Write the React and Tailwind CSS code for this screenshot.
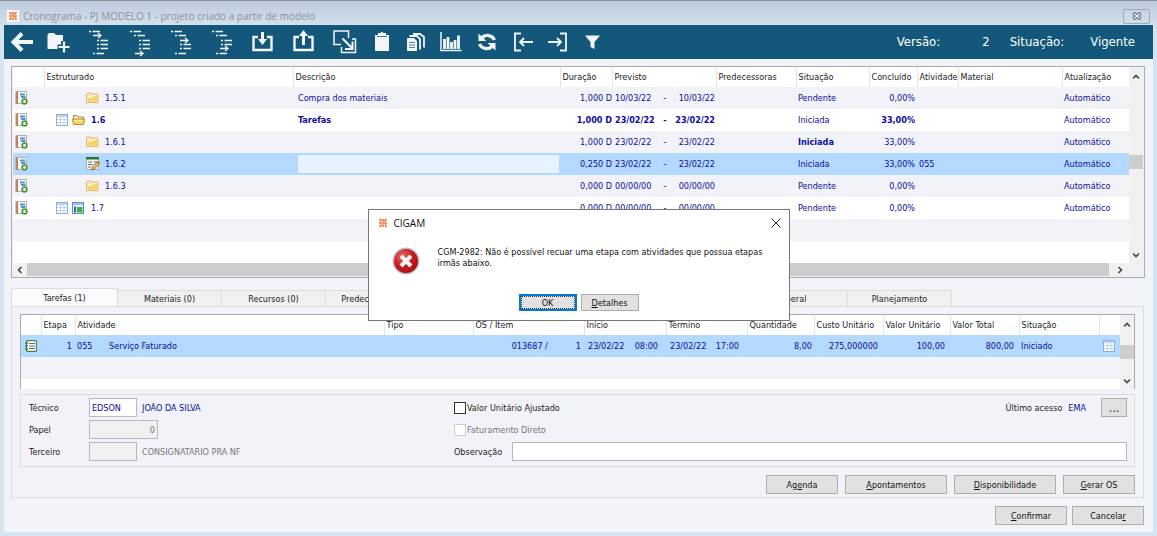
const stages = [
  { code: '1.5.1', level: 2, icon: 'folder', description: 'Compra dos materiais', duration: '1,000 D', start: '10/03/22', end: '10/03/22', status: 'Pendente', done: '0,00%' },
  { code: '1.6', level: 1, icon: 'open', description: 'Tarefas', duration: '1,000 D', start: '23/02/22', end: '23/02/22', status: 'Iniciada', done: '33,00%', bold: true },
  { code: '1.6.1', level: 2, icon: 'folder', duration: '1,000 D', start: '23/02/22', end: '23/02/22', status: 'Iniciada', done: '33,00%', boldStatus: true },
  { code: '1.6.2', level: 2, icon: 'edit', duration: '0,250 D', start: '23/02/22', end: '23/02/22', status: 'Iniciada', done: '33,00%', activity: '055', selected: true },
  { code: '1.6.3', level: 2, icon: 'folder', duration: '0,000 D', start: '00/00/00', end: '00/00/00', status: 'Pendente', done: '0,00%' },
  { code: '1.7', level: 1, icon: 'module', duration: '0,000 D', start: '00/00/00', end: '00/00/00', status: 'Pendente', done: '0,00%' },
];

function LogoIcon() {
  return (
    <svg className="h-3 w-3 shrink-0" viewBox="0 0 12 12">
      <rect width="12" height="12" rx="1" fill="#fff" />
      <path d="M2.500 2l2 2.500M5.500 2l1 2.500M9.500 2L7.500 4.500M2 6h3M6 5l1 2M7.500 6h2.500M2.500 10L4.500 7.500M6 10V7.500M9.500 10L8 7.500" stroke="#f0702a" strokeWidth="1.600" fill="none" />
    </svg>
  );
}

function NotebookIcon() {
  return (
    <svg className="h-[14px] w-[13px]" viewBox="0 0 13 14">
      <rect x="2.500" y="0.500" width="9" height="12" fill="#f6f8fb" stroke="#a9b4c2" />
      <rect x="0.500" y="0.500" width="2.500" height="12.500" fill="#c07a55" />
      <path d="M0 2h1.500M0 4.500h1.500M0 7h1.500M0 9.500h1.500M0 12h1.500" stroke="#f3dccd" strokeWidth="0.600" />
      <path d="M5 3.500h5M6 6h4.500" stroke="#5b8ecb" strokeWidth="1.800" />
      <circle cx="9.500" cy="10.500" r="2.300" fill="#fff" stroke="#4e9a3a" strokeWidth="1.800" />
    </svg>
  );
}

function GridIcon() {
  return (
    <svg className="h-3 w-3" viewBox="0 0 12 12">
      <rect x="0.500" y="0.500" width="11" height="11" fill="#fff" stroke="#86b1e0" />
      <rect x="1" y="1" width="10" height="2" fill="#bcd6f2" />
      <path d="M1 5.500h10M1 8.500h10M4.500 3v8M8 3v8" stroke="#b3cde8" strokeWidth="0.800" />
    </svg>
  );
}

function FolderIcon() {
  return (
    <svg className="h-3 w-[13px]" viewBox="0 0 13 12">
      <path d="M0.500 10.500v-8.500l1-1h3l1 1h6.500v8.500z" fill="#fbe9b0" stroke="#dfb566" />
      <path d="M2 5.500h4.500l1-1.500h3.500v5.500H2z" fill="#f7d365" />
      <path d="M2 5h4l1-1.500h4" stroke="#fffdf0" fill="none" />
    </svg>
  );
}

function OpenFolderIcon() {
  return (
    <svg className="h-3 w-[13px]" viewBox="0 0 13 12">
      <path d="M1.500 9V1.500h3.500l1 1.500h5.500v3" fill="#fdf4cf" stroke="#a58a45" />
      <path d="M0.500 5h12l-1 5.500h-10z" fill="#f8d467" stroke="#bf8a2c" />
      <path d="M2 6.500h9" stroke="#fff0b3" />
    </svg>
  );
}

function ModuleIcon() {
  return (
    <svg className="h-3 w-3" viewBox="0 0 12 12">
      <rect x="0.500" y="0.500" width="11" height="11" fill="#e8f2fd" stroke="#5c8fce" />
      <path d="M1 2h10" stroke="#9cc1ea" strokeWidth="2" />
      <rect x="2" y="4.500" width="2" height="6" fill="#2f6ab4" />
      <rect x="5" y="5" width="5.500" height="5.500" fill="#43b03d" />
    </svg>
  );
}

function EditIcon() {
  return (
    <svg className="h-[14px] w-[13px] overflow-visible" viewBox="0 0 13 14">
      <rect x="0.500" y="0.500" width="12" height="12" fill="#f4f7f4" stroke="#9fb0a5" />
      <rect width="13" height="2.500" fill="#237a2a" />
      <path d="M2 5h4M2 7.500h5M2 10h3M8 5h3" stroke="#5d7483" />
      <path d="M5.500 13l1-3 5-5.500 2 2L8.500 12z" fill="#eeb94e" stroke="#86572a" strokeWidth="0.800" />
      <path d="M11.500 4.500l2 2" stroke="#d3503f" strokeWidth="1.500" />
    </svg>
  );
}

function ListIcon() {
  return (
    <svg className="h-3 w-3" viewBox="0 0 12 12">
      <rect x="1.500" y="0.700" width="10" height="10.600" rx="1" fill="#fff" stroke="#3b8b45" strokeWidth="1.300" />
      <path d="M4 3.500h6M4 6h6M4 8.500h6" stroke="#666" />
      <path d="M0 3h3M0 6h3M0 9h3" stroke="#35673d" />
    </svg>
  );
}

const stageIcons = { folder: FolderIcon, open: OpenFolderIcon, edit: EditIcon, module: ModuleIcon };

function ToolIcon({ label, width = 'w-[41px]', children }) {
  return (
    <button type="button" aria-label={label} title={label} className={`${width} flex h-7 shrink-0 items-center justify-center text-[#f2f6f8]`}>
      <svg className="h-6 w-6 shrink-0 overflow-visible" viewBox="0 0 24 24" fill="none" stroke="currentColor" strokeWidth="1.500">{children}</svg>
    </button>
  );
}

const treeRowY = [1.5, 5.5, 10.5, 14.5, 18.5, 23.5];

// Outline with five plain rows and one arrow row
function TreeIcon({ label, arrow, indents }) {
  return (
    <ToolIcon label={label}>
      {indents.map((x, i) => {
        const y = treeRowY[i];
        return i === arrow
          ? <path key={i} d={`M${x} ${y}h8M${x + 5} ${y - 2.5}l3 2.500l-3 2.500`} strokeWidth="1.300" />
          : <path key={i} d={`M${x} ${y}h2M${x + 3.5} ${y}h7.500`} strokeWidth="1.300" />;
      })}
    </ToolIcon>
  );
}

function Toolbar() {
  return (
    <header className="flex h-[34px] items-center bg-[#13587a] pr-[18px] pl-0.5">
      <ToolIcon label="Voltar" width="w-8"><path d="M23 12H4M12 3.500L3.500 12l8.500 8.500" strokeWidth="4" /></ToolIcon>
      <ToolIcon label="Nova etapa" width="w-10">
        <path d="M1.500 5l1.500-2h5l2 2h7v8l-3 6H1.500z" fill="currentColor" stroke="none" />
        <path d="M17.500 11v12M11.500 17h12" stroke="#13587a" strokeWidth="5" />
        <path d="M18 11.500v11M12.500 17h11" strokeWidth="2.200" />
      </ToolIcon>
      <TreeIcon label="Mover acima" arrow={1} indents={[2, 6, 10, 10, 10, 6]} />
      <TreeIcon label="Mover abaixo" arrow={5} indents={[2, 6, 11, 11, 11, 7]} />
      <TreeIcon label="Avançar" arrow={2} indents={[2, 6, 11, 11, 11, 6]} />
      <TreeIcon label="Recuar" arrow={4} indents={[2, 6, 11, 11, 10, 6]} />
      <ToolIcon label="Importar">
        <path d="M7 7H2.500v13h18V7H16" strokeWidth="2.400" />
        <path d="M11.500 2v8" strokeWidth="3" /><path d="M7 9h9l-4.500 6z" fill="currentColor" stroke="none" />
      </ToolIcon>
      <ToolIcon label="Exportar">
        <path d="M7 7H2.500v13h18V7H16" strokeWidth="2.400" />
        <path d="M11.500 5v10" strokeWidth="3" /><path d="M7 6h9L11.500 0z" fill="currentColor" stroke="none" />
      </ToolIcon>
      <ToolIcon label="Mover para">
        <path d="M8 14.500H1V1h14.500v7" /><path d="M19 9h3.500v13.500H8.500V17" />
        <path d="M9.500 8.500l10 10M19.500 11.500V19H12" strokeWidth="2" />
      </ToolIcon>
      <ToolIcon label="Colar" width="w-[34px]">
        <path d="M5 5h14v16H5zM8 3h2.500l1.500-1.500L13.500 3H16v3H8z" fill="currentColor" stroke="none" />
        <path d="M7 6.500h10" stroke="#13587a" strokeWidth="0.800" />
      </ToolIcon>
      <ToolIcon label="Copiar" width="w-[34px]">
        <path d="M3 8h7l3 3v10H3z" fill="currentColor" stroke="none" />
        <path d="M5.500 6h7.500l3 3v10.500M9 4h7l4 3v10.500" strokeWidth="1.800" />
        <path d="M5 12.500h6M5 15h6M5 17.500h6" stroke="#13587a" strokeWidth="0.700" />
      </ToolIcon>
      <ToolIcon label="Gráfico" width="w-[35px]">
        <path d="M2 2v18.500h20.500" />
        <path d="M5.500 9v10M9 7v12M12.500 12v7M16 10v9M19.500 5.500V19" strokeWidth="2.800" />
      </ToolIcon>
      <ToolIcon label="Atualizar" width="w-[37px]">
        <path d="M19.500 10C17.500 5 10.500 4 7 7.500M4.500 14c2 5 9 6 12.500 2.500" strokeWidth="3.200" />
        <path d="M3.500 3.500v7.500h8zM20.500 20.500V13h-8z" fill="currentColor" stroke="none" />
      </ToolIcon>
      <ToolIcon label="Recuar início" width="w-[35px]">
        <path d="M10 3.500H4v17h6" strokeWidth="1.800" /><path d="M22 12H9M13 8l-4 4 4 4" strokeWidth="1.800" />
      </ToolIcon>
      <ToolIcon label="Avançar término" width="w-[35px]">
        <path d="M14 3.500h6v17h-6" strokeWidth="1.800" /><path d="M2 12h13M11 8l4 4-4 4" strokeWidth="1.800" />
      </ToolIcon>
      <ToolIcon label="Filtrar" width="w-[35px]">
        <path d="M4 5.500h15l-5.500 6.500v7l-4-2v-5z" fill="currentColor" stroke="none" />
      </ToolIcon>
      <dl className="ml-auto flex items-center text-[13px] whitespace-nowrap text-white">
        <dt>Versão:</dt>
        <dd className="ml-[42px]">2</dd>
        <dt className="ml-5">Situação:</dt>
        <dd className="ml-[26px]">Vigente</dd>
      </dl>
    </header>
  );
}

function Chevron({ className }) {
  return (
    <svg className={`h-2 w-2 ${className}`} viewBox="0 0 8 8" fill="none" stroke="#444" strokeWidth="1.600"><path d="M1 5.500l3-3 3 3" /></svg>
  );
}

function VerticalScroll({ thumbGap }) {
  return (
    <div className="flex w-[14px] shrink-0 flex-col items-center bg-[#f0f0f0]">
      <button type="button" aria-label="Rolar para cima" className="flex h-5 items-center"><Chevron className="" /></button>
      <div className="flex w-full grow flex-col">
        <div className={thumbGap}></div>
        <div className="h-[14px] bg-[#cdcdcd]"></div>
      </div>
      <button type="button" aria-label="Rolar para baixo" className="flex h-4 items-center"><Chevron className="rotate-180" /></button>
    </div>
  );
}

function HeadCell({ children, className = '' }) {
  return <th className={`h-5 border-l border-[#e5e5e5] bg-white pl-0.5 text-left font-normal text-[#222] first:border-l-0 ${className}`}>{children}</th>;
}

function StageRow({ stage }) {
  const Icon = stageIcons[stage.icon];
  const bold = stage.bold ? 'font-bold' : '';
  return (
    <tr className={`h-[22px] ${stage.selected ? 'bg-[#b3d9ff]' : 'odd:bg-[#f2f3f9] even:bg-white'}`}>
      <td className="pl-0.5"><NotebookIcon /></td>
      <td>
        {stage.level === 1 ? (
          <div className={`flex items-center pl-3 ${bold}`}>
            <GridIcon />
            <span className="mr-1.5 ml-1 w-[13px]"><Icon /></span>
            {stage.code}
          </div>
        ) : (
          <div className="flex items-center gap-1.5 pl-[42px]">
            <Icon />
            {stage.code}
          </div>
        )}
      </td>
      <td className={`pr-px pl-[5px] ${bold}`}>
        {stage.selected
          ? <input type="text" aria-label="Descrição" className="block h-[18px] w-full bg-[#e6f2ff] px-1 outline-none" />
          : stage.description}
      </td>
      <td className={`text-right ${bold}`}>{stage.duration}</td>
      <td className="pr-px pl-[3px]">
        <div className={`flex justify-between ${bold}`}><span>{stage.start}</span><span>-</span><span>{stage.end}</span></div>
      </td>
      <td></td>
      <td className={`pl-0.5 ${stage.boldStatus ? 'font-bold' : ''}`}>{stage.status}</td>
      <td className={`pr-0.5 text-right ${bold}`}>{stage.done}</td>
      <td className="pl-0.5">{stage.activity}</td>
      <td></td>
      <td className="pl-0.5">Automático</td>
    </tr>
  );
}

function StageTable() {
  return (
    <section className="border border-[#a9abb9] bg-[#f0f0f0] px-px pb-px">
      <div className="flex">
        <table className="w-full table-fixed border-collapse bg-white whitespace-nowrap text-[#0c0ca0]">
          <colgroup>
            <col className="w-[31px]" />
            <col className="w-[249px]" />
            <col />
            <col className="w-[52px]" />
            <col className="w-[104px]" />
            <col className="w-[80px]" />
            <col className="w-[73px]" />
            <col className="w-[48px]" />
            <col className="w-[41px]" />
            <col className="w-[104px]" />
            <col className="w-[67px]" />
          </colgroup>
          <thead>
            <tr>
              <HeadCell />
              <HeadCell>Estruturado</HeadCell>
              <HeadCell>Descrição</HeadCell>
              <HeadCell>Duração</HeadCell>
              <HeadCell>Previsto</HeadCell>
              <HeadCell>Predecessoras</HeadCell>
              <HeadCell>Situação</HeadCell>
              <HeadCell>Concluído</HeadCell>
              <HeadCell>Atividade</HeadCell>
              <HeadCell>Material</HeadCell>
              <HeadCell>Atualização</HeadCell>
            </tr>
          </thead>
          <tbody>
            {stages.map((stage) => <StageRow key={stage.code} stage={stage} />)}
            <tr className="h-[22px] bg-[#f2f3f9]"><td colSpan={11}></td></tr>
            <tr className="h-[22px]"><td colSpan={11}></td></tr>
          </tbody>
        </table>
        <VerticalScroll thumbGap="h-[68px]" />
      </div>
      <div className="flex h-[13px] items-center">
        <button type="button" aria-label="Rolar para a esquerda" className="flex w-[14px] justify-center"><Chevron className="-rotate-90" /></button>
        <div className="h-full grow bg-[#cdcdcd]"></div>
        <button type="button" aria-label="Rolar para a direita" className="mr-3 flex w-[22px] justify-center"><Chevron className="rotate-90" /></button>
      </div>
    </section>
  );
}

function Tab({ active, className = 'w-[104px]', children }) {
  return (
    <button
      type="button"
      role="tab"
      aria-selected={active ? 'true' : 'false'}
      className={`shrink-0 border-t border-r border-[#dcdcdc] whitespace-nowrap text-[#222] ${active ? 'h-[18px] border-l bg-[#fafafd]' : 'h-4 bg-[#f0f0f0]'} ${className}`}
    >
      {children}
    </button>
  );
}

function Tabs() {
  return (
    <div role="tablist" className="mt-[10px] flex items-end">
      <Tab active className="w-[107px]">Tarefas (1)</Tab>
      <Tab>Materiais (0)</Tab>
      <Tab>Recursos (0)</Tab>
      <Tab>Predecessoras (0)</Tab>
      <div className="w-[314px] border-r border-[#dcdcdc]"></div>
      <Tab>Geral</Tab>
      <Tab>Planejamento</Tab>
    </div>
  );
}

function TaskTable() {
  return (
    <div className="flex h-[75px] overflow-hidden border-x border-t border-[#a9abb9] bg-white">
      <div className="grow">
        <table className="w-full table-fixed border-collapse whitespace-nowrap text-[#0c0ca0]">
          <colgroup>
            <col className="w-[20px]" />
            <col className="w-[34px]" />
            <col />
            <col className="w-[89px]" />
            <col className="w-[111px]" />
            <col className="w-[82px]" />
            <col className="w-[81px]" />
            <col className="w-[67px]" />
            <col className="w-[69px]" />
            <col className="w-[67px]" />
            <col className="w-[69px]" />
            <col className="w-[80px]" />
            <col className="w-[21px]" />
          </colgroup>
          <thead>
            <tr>
              <HeadCell />
              <HeadCell>Etapa</HeadCell>
              <HeadCell>Atividade</HeadCell>
              <HeadCell>Tipo</HeadCell>
              <HeadCell>OS / Item</HeadCell>
              <HeadCell>Início</HeadCell>
              <HeadCell>Término</HeadCell>
              <HeadCell>Quantidade</HeadCell>
              <HeadCell>Custo Unitário</HeadCell>
              <HeadCell>Valor Unitário</HeadCell>
              <HeadCell>Valor Total</HeadCell>
              <HeadCell>Situação</HeadCell>
              <HeadCell />
            </tr>
          </thead>
          <tbody>
            <tr className="h-[22px] bg-[#b3d9ff]">
              <td className="pl-1"><ListIcon /></td>
              <td className="pr-[3px] text-right">1</td>
              <td className="pl-0.5"><span className="inline-block w-8">055</span>Serviço Faturado</td>
              <td></td>
              <td className="pr-[3px]"><div className="flex justify-end gap-7"><span>013687 /</span><span>1</span></div></td>
              <td className="pr-2 pl-1"><div className="flex justify-between"><span>23/02/22</span><span>08:00</span></div></td>
              <td className="pr-2 pl-1"><div className="flex justify-between"><span>23/02/22</span><span>17:00</span></div></td>
              <td className="pr-0.5 text-right">8,00</td>
              <td className="pr-[5px] text-right">275,000000</td>
              <td className="pr-[5px] text-right">100,00</td>
              <td className="pr-[5px] text-right">800,00</td>
              <td className="pl-0.5">Iniciado</td>
              <td className="pl-1"><GridIcon /></td>
            </tr>
            <tr className="h-[22px] bg-[#f2f3f9]"><td colSpan={13}></td></tr>
          </tbody>
        </table>
      </div>
      <VerticalScroll thumbGap="h-[10px]" />
    </div>
  );
}

const fieldClass = 'h-[19px] border border-[#b5b7c4] px-0.5 outline-none';

function TaskForm() {
  return (
    <div className="mt-[5px] flex border border-[#dcdcdf] pt-[3px] pr-[7px] pb-[5px] pl-2 text-[#222]">
      <div className="grid w-[425px] grid-cols-[60px_1fr] items-center gap-y-[3px]">
        <label htmlFor="tecnico">Técnico</label>
        <div className="flex items-center gap-[5px]">
          <input id="tecnico" type="text" defaultValue="EDSON" className={`${fieldClass} w-12 bg-white text-[#0c0ca0]`} />
          <span className="text-[#0c0ca0]">JOÃO DA SILVA</span>
        </div>
        <label htmlFor="papel">Papel</label>
        <input id="papel" type="text" disabled defaultValue="0" className={`${fieldClass} w-[69px] bg-[#f0f0f0] text-right text-[#777]`} />
        <label htmlFor="terceiro">Terceiro</label>
        <div className="flex items-center gap-[5px]">
          <input id="terceiro" type="text" disabled className={`${fieldClass} w-12 bg-[#f0f0f0]`} />
          <span className="text-[#777]">CONSIGNATARIO PRA NF</span>
        </div>
      </div>
      <div className="flex grow flex-col gap-[3px]">
        <div className="flex h-[19px] items-center">
          <label className="flex items-center gap-px">
            <input type="checkbox" className="h-3 w-3 appearance-none border border-[#333] bg-white" />
            Valor Unitário Ajustado
          </label>
          <span className="ml-auto">Último acesso</span>
          <span className="mr-[15px] ml-1.5 text-[#0c0ca0]">EMA</span>
          <button type="button" aria-label="Detalhes do acesso" className="h-[19px] w-[26px] border border-[#adadad] bg-[#e1e1e1] text-xs">...</button>
        </div>
        <label className="flex h-[19px] items-center gap-px text-[#777]">
          <input type="checkbox" disabled className="h-3 w-3 appearance-none border border-[#ccc] bg-white" />
          Faturamento Direto
        </label>
        <div className="flex items-center">
          <label htmlFor="observacao" className="w-[58px]">Observação</label>
          <input id="observacao" type="text" className={`${fieldClass} grow bg-white`} />
        </div>
      </div>
    </div>
  );
}

function ActionButton({ className = 'w-[72px]', children }) {
  return <button type="button" className={`h-[19px] border border-[#adadad] bg-[#e1e1e1] text-[#111] ${className}`}>{children}</button>;
}

function ErrorDialog() {
  return (
    <div role="alertdialog" aria-label="CIGAM" className="absolute top-[209px] left-1/2 w-[422px] -translate-x-1/2 border border-[#777] bg-white text-[#111]">
      <div className="flex h-[25px] items-center pr-2 pl-2">
        <LogoIcon />
        <span className="ml-[5px] font-['Open_Sans',sans-serif] text-[10px]">CIGAM</span>
        <button type="button" aria-label="Fechar" className="ml-auto">
          <svg className="h-[10px] w-[10px]" viewBox="0 0 10 10" stroke="#222"><path d="M0.500 0.500l9 9M9.500 0.500l-9 9" /></svg>
        </button>
      </div>
      <div className="flex items-start px-[23px] pt-3">
        <svg className="h-7 w-7 shrink-0" viewBox="0 0 28 28">
          <defs>
            <radialGradient id="error-red" cx="0.35" cy="0.3" r="0.8">
              <stop offset="0" stopColor="#e46a6a" />
              <stop offset="0.5" stopColor="#c81e22" />
              <stop offset="1" stopColor="#a30c10" />
            </radialGradient>
          </defs>
          <circle cx="14" cy="14" r="13.500" fill="#b9bcbc" />
          <circle cx="14" cy="14" r="12" fill="url(#error-red)" />
          <path d="M9 9l10 10M19 9L9 19" stroke="#f4f4f4" strokeWidth="4" />
        </svg>
        <p className="ml-[18px] leading-[11px] whitespace-nowrap">
          CGM-2982: Não é possível recuar uma etapa com atividades que possua etapas<br />irmãs abaixo.
        </p>
      </div>
      <div className="mt-[19px] mb-[9px] flex justify-center gap-1">
        <button type="button" className="h-[17px] w-[58px] border-2 border-[#0078d7] bg-[#e1e1e1] outline outline-1 -outline-offset-3 outline-dotted outline-[#333]">OK</button>
        <button type="button" className="h-[17px] w-[58px] border border-[#adadad] bg-[#e1e1e1]"><u>D</u>etalhes</button>
      </div>
    </div>
  );
}

export default function App() {
  return (
    <div className="relative min-h-screen bg-[#d6e4f2] px-1 pb-1.5 font-['DejaVu_Sans_Condensed','DejaVu_Sans',sans-serif] text-[9px] leading-[12px]">
      <div className="-mx-1 flex h-[25px] items-center border-t border-[#8a9097] bg-gradient-to-b from-[#bccada] to-[#d3e0ee] pt-1.5 pr-[7px] pl-[7px]">
        <LogoIcon />
        <h1 className="ml-1 font-['Open_Sans',sans-serif] text-[10px] text-[#8c9299]">Cronograma - PJ MODELO 1 - projeto criado a partir de modelo</h1>
        <button type="button" aria-label="Fechar" className="ml-auto flex h-[15px] w-[27px] items-center justify-center rounded-xs border border-[#9aa9b8]">
          <svg className="h-2 w-2.5" viewBox="0 0 10 8" fill="none"><path d="M1.500 1l7 6M8.500 1l-7 6" stroke="#59616a" strokeWidth="3.400" /><path d="M2 1.500l6 5M8 1.500l-6 5" stroke="#fff" strokeWidth="1.400" /></svg>
        </button>
      </div>
      <Toolbar />
      <main className="bg-[#f2f3f9] pt-[7px] pr-2 pb-[7px] pl-[7px]">
        <StageTable />
        <Tabs />
        <section className="mr-px border border-[#dcdcdf] px-2 pt-[7px] pb-[3px]">
          <TaskTable />
          <TaskForm />
          <div className="mt-2 flex justify-end gap-[7px]">
            <ActionButton>Ag<u>e</u>nda</ActionButton>
            <ActionButton className="w-[102px]"><u>A</u>pontamentos</ActionButton>
            <ActionButton className="w-[102px]"><u>D</u>isponibilidade</ActionButton>
            <ActionButton><u>G</u>erar OS</ActionButton>
          </div>
        </section>
        <div className="mt-2 mr-px flex justify-end gap-[5px]">
          <ActionButton><u>C</u>onfirmar</ActionButton>
          <ActionButton>Cancela<u>r</u></ActionButton>
        </div>
      </main>
      <ErrorDialog />
    </div>
  );
}
